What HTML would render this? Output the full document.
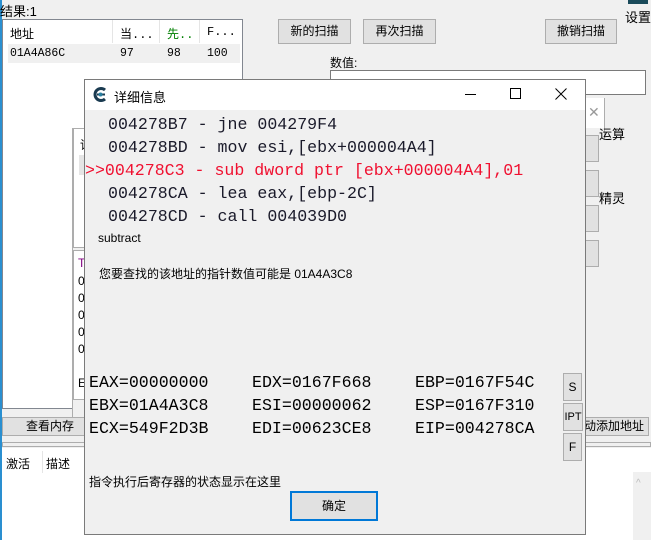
<!DOCTYPE html>
<html><head><meta charset="utf-8"><style>
*{margin:0;padding:0;box-sizing:border-box}
body{width:651px;height:540px;overflow:hidden;background:#f0f0f0;position:relative;font-family:"Liberation Sans","Noto Sans CJK SC",sans-serif;font-size:12px;color:#000}
.a{position:absolute;white-space:nowrap}
.btn{position:absolute;background:#e1e1e1;border:1px solid #adadad;text-align:center;font-size:12px}
.mono{font-family:"Liberation Mono","DejaVu Sans Mono",monospace}
.serifmono{font-family:"Liberation Mono",monospace;font-size:16.6px}
.reg{font-family:"Liberation Mono",monospace;font-size:16.6px}
</style></head><body>
<div class="a" style="left:0;top:0;width:2px;height:540px;background:#2a8fd0"></div>
<div class="a" style="left:0;top:1px;font-size:13px">结果:1</div>
<div class="a" style="left:2px;top:19px;width:241px;height:390px;background:#fff;border:1px solid #828790"></div>
<div class="a" style="left:10px;top:25px;font-size:12px">地址</div>
<div class="a" style="left:112px;top:20px;width:1px;height:23px;background:#e5e5e5"></div>
<div class="a mono" style="left:120px;top:25px;font-size:12px">当...</div>
<div class="a" style="left:159px;top:20px;width:1px;height:23px;background:#e5e5e5"></div>
<div class="a mono" style="left:167px;top:25px;font-size:12px;color:#008000">先..</div>
<div class="a" style="left:199px;top:20px;width:1px;height:23px;background:#e5e5e5"></div>
<div class="a mono" style="left:207px;top:25px;font-size:12px">F...</div>
<div class="a" style="left:8px;top:44px;width:232px;height:19px;background:#f0f0f0"></div>
<div class="a mono" style="left:10px;top:47px;font-size:11.5px">01A4A86C</div>
<div class="a mono" style="left:120px;top:47px;font-size:11.5px">97</div>
<div class="a mono" style="left:167px;top:47px;font-size:11.5px">98</div>
<div class="a mono" style="left:207px;top:47px;font-size:11.5px">100</div>
<div class="btn" style="left:278px;top:19px;width:73px;height:25px;line-height:23px">新的扫描</div>
<div class="btn" style="left:363px;top:19px;width:73px;height:25px;line-height:23px">再次扫描</div>
<div class="btn" style="left:545px;top:19px;width:72px;height:25px;line-height:23px">撤销扫描</div>
<div class="a" style="left:628px;top:0;width:20px;height:4px;background:#1a4a5a"></div>
<div class="a" style="left:625px;top:7px;font-size:13px">设置</div>
<div class="a" style="left:330px;top:54px;font-size:12px">数值:</div>
<div class="a" style="left:330px;top:70px;width:316px;height:25px;background:#fff;border:1px solid #7a7a7a"></div>
<div class="a" style="left:72px;top:98px;width:208px;height:320px;background:#f0f0f0;border:1px solid #adadad"></div>
<div class="a" style="left:72px;top:98px;width:208px;height:30px;background:#fff"></div>
<div class="a" style="left:73px;top:128px;width:30px;height:120px;background:#fff;border:1px solid #adadad"></div>
<div class="a" style="left:80px;top:136px">详</div>
<div class="a" style="left:79px;top:155px;width:8px;height:20px;background:#e5e5e5"></div>
<div class="a" style="left:73px;top:250px;width:12px;height:150px;background:#fff;border:1px solid #adadad"></div>
<div class="a" style="left:78px;top:256px;color:#800080">T</div>
<div class="a" style="left:78px;top:274px">0</div><div class="a" style="left:78px;top:291px">0</div><div class="a" style="left:78px;top:308px">0</div><div class="a" style="left:78px;top:325px">0</div><div class="a" style="left:78px;top:342px">0</div>
<div class="a" style="left:78px;top:376px">E</div>
<div class="a" style="left:585px;top:98px;width:20px;height:30px;background:#fff"></div>
<div class="a" style="left:588px;top:104px;color:#999;font-size:14px">✕</div>
<div class="a" style="left:604px;top:98px;width:1px;height:42px;background:#adadad"></div>
<div class="a" style="left:599px;top:124px;font-size:13px">运算</div>
<div class="a" style="left:599px;top:188px;font-size:13px">精灵</div>
<div class="btn" style="left:585px;top:135px;width:14px;height:27px"></div>
<div class="btn" style="left:585px;top:170px;width:14px;height:27px"></div>
<div class="btn" style="left:585px;top:205px;width:14px;height:27px"></div>
<div class="btn" style="left:585px;top:240px;width:14px;height:27px"></div>
<div class="a" style="left:583px;top:98px;width:1px;height:320px;background:#adadad"></div>
<div class="a" style="left:72px;top:417px;width:512px;height:1px;background:#adadad"></div>
<div class="btn" style="left:2px;top:417px;width:96px;height:19px;line-height:17px">查看内存</div>
<div class="btn" style="left:583px;top:417px;width:66px;height:19px;line-height:17px;text-align:right;padding-right:4px">动添加地址</div>
<div class="a" style="left:2px;top:442px;width:649px;height:5px;border:1px solid #adadad;background:#f0f0f0"></div>
<div class="a" style="left:2px;top:448px;width:649px;height:92px;background:#fff"></div>
<div class="a" style="left:6px;top:455px;font-size:12px">激活</div>
<div class="a" style="left:42px;top:451px;width:1px;height:22px;background:#e5e5e5"></div>
<div class="a" style="left:46px;top:455px;font-size:12px">描述</div>
<div class="a" style="left:633px;top:472px;width:18px;height:68px;background:#f0f0f0"></div>
<div class="a" style="left:636px;top:478px;color:#bbb;font-size:10px">^</div>
<div class="a" style="left:84px;top:79px;width:502px;height:456px;background:#f0f0f0;border:1px solid #7a7a7a"></div>
<div class="a" style="left:85px;top:80px;width:500px;height:30px;background:#fff"></div>
<svg class="a" style="left:92px;top:86px" width="17" height="17" viewBox="0 0 17 17"><path d="M13 4 A6 6 0 1 0 13 13" fill="none" stroke="#1a3a50" stroke-width="3"/><path d="M5 8.5 H13" stroke="#1a3a50" stroke-width="2"/><circle cx="8.5" cy="8.5" r="2" fill="#2a7fa0"/></svg>
<div class="a" style="left:114px;top:87px;font-size:13px">详细信息</div>
<div class="a" style="left:465px;top:94px;width:11px;height:1px;background:#000"></div>
<div class="a" style="left:510px;top:88px;width:11px;height:11px;border:1px solid #000"></div>
<svg class="a" style="left:555px;top:88px" width="12" height="12"><path d="M0.5 0.5 L11.5 11.5 M11.5 0.5 L0.5 11.5" stroke="#000" stroke-width="1"/></svg>
<div class="a serifmono" style="left:108px;top:115px;color:#1a1a2a">004278B7 - jne 004279F4</div>
<div class="a serifmono" style="left:108px;top:138px;color:#1a1a2a">004278BD - mov esi,[ebx+000004A4]</div>
<div class="a serifmono" style="left:85px;top:161px;color:#f01030">&gt;&gt;004278C3 - sub dword ptr [ebx+000004A4],01</div>
<div class="a serifmono" style="left:108px;top:184px;color:#1a1a2a">004278CA - lea eax,[ebp-2C]</div>
<div class="a serifmono" style="left:108px;top:207px;color:#1a1a2a">004278CD - call 004039D0</div>
<div class="a" style="left:98px;top:231px;font-size:12px">subtract</div>
<div class="a" style="left:99px;top:265px;font-size:12px">您要查找的该地址的指针数值可能是 01A4A3C8</div>
<div class="a reg" style="left:89px;top:373px">EAX=00000000</div>
<div class="a reg" style="left:252px;top:373px">EDX=0167F668</div>
<div class="a reg" style="left:415px;top:373px">EBP=0167F54C</div>
<div class="a reg" style="left:89px;top:396px">EBX=01A4A3C8</div>
<div class="a reg" style="left:252px;top:396px">ESI=00000062</div>
<div class="a reg" style="left:415px;top:396px">ESP=0167F310</div>
<div class="a reg" style="left:89px;top:419px">ECX=549F2D3B</div>
<div class="a reg" style="left:252px;top:419px">EDI=00623CE8</div>
<div class="a reg" style="left:415px;top:419px">EIP=004278CA</div>
<div class="btn" style="left:563px;top:373px;width:19px;height:28px;line-height:26px">S</div>
<div class="btn" style="left:563px;top:403px;width:20px;height:28px;line-height:26px;font-size:11px">IPT</div>
<div class="btn" style="left:563px;top:433px;width:19px;height:28px;line-height:26px">F</div>
<div class="a" style="left:89px;top:473px;font-size:12px">指令执行后寄存器的状态显示在这里</div>
<div class="btn" style="left:290px;top:491px;width:88px;height:30px;line-height:26px;border:2px solid #0078d7">确定</div>
</body></html>
